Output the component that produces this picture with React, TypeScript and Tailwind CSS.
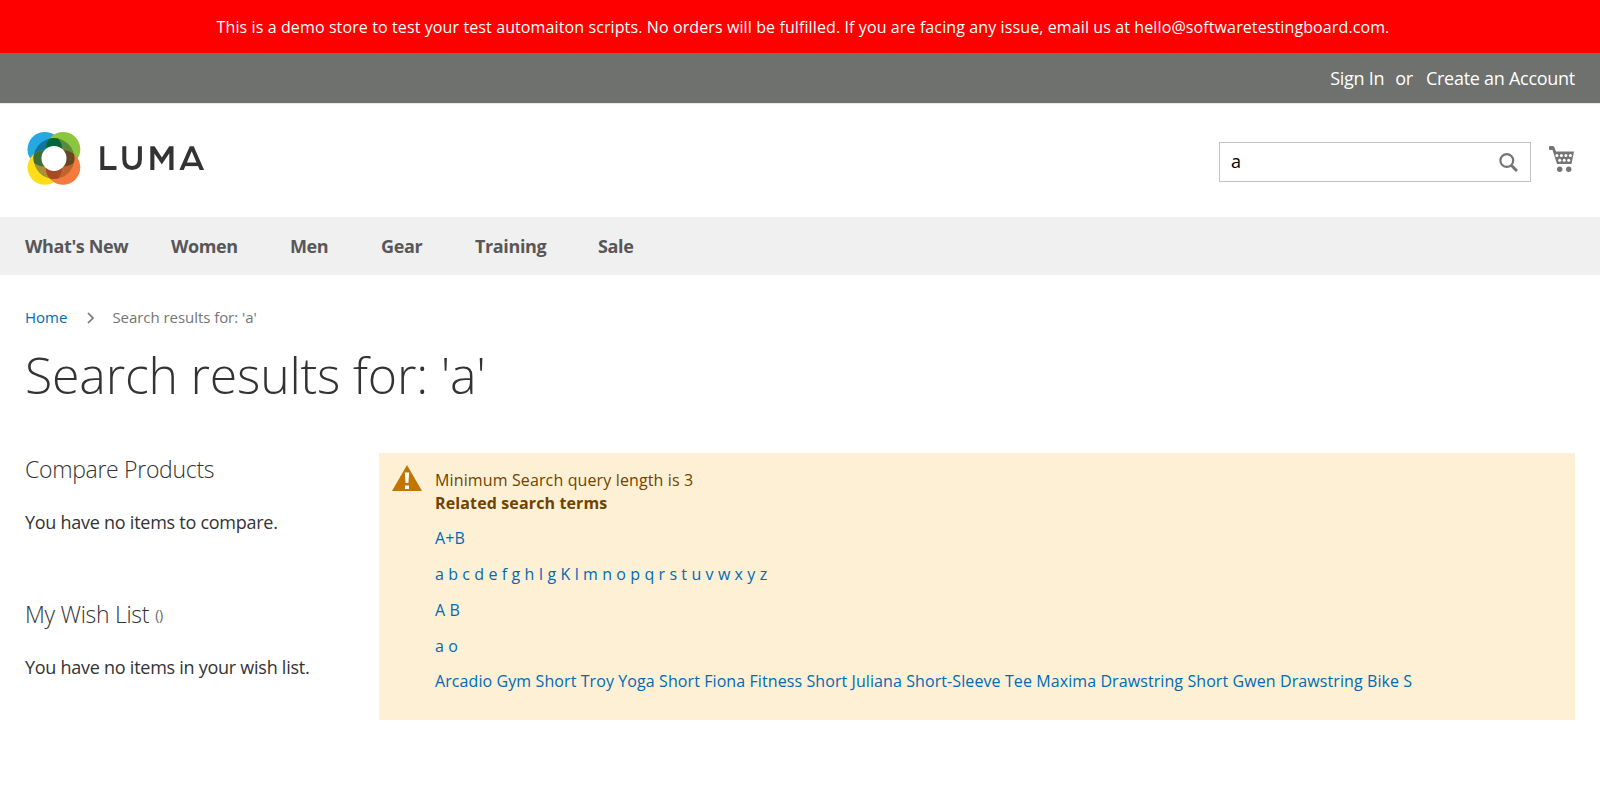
const NAV: [string, string][] = [
  ["What's New", 'w-[146px]'],
  ['Women', 'w-[119px]'],
  ['Men', 'w-[91px]'],
  ['Gear', 'w-[94px]'],
  ['Training', 'w-[123px]'],
  ['Sale', 'w-[40px]'],
];

const TERMS = [
  'A+B',
  'a b c d e f g h I g K l m n o p q r s t u v w x y z',
  'A B',
  'a o',
  'Arcadio Gym Short Troy Yoga Short Fiona Fitness Short Juliana Short-Sleeve Tee Maxima Drawstring Short Gwen Drawstring Bike S',
];

function Logo() {
  return (
    <svg className="mt-[29px]" width="182" height="56" viewBox="0 0 182 56">
      <defs>
        <clipPath id="ring"><circle cx="29" cy="26.500" r="20.400" /></clipPath>
        <clipPath id="tl"><circle cx="19.800" cy="17.300" r="17.300" /></clipPath>
        <clipPath id="br"><circle cx="38" cy="35.500" r="17.300" /></clipPath>
      </defs>
      <circle cx="19.800" cy="17.300" r="17.300" fill="#26a9e0" />
      <circle cx="38" cy="17.300" r="17.300" fill="#8cc63f" />
      <circle cx="19.800" cy="35.500" r="17.300" fill="#ffde17" />
      <circle cx="38" cy="35.500" r="17.300" fill="#f47b3e" />
      <g clipPath="url(#ring)">
        <circle cx="19.800" cy="17.300" r="17.300" fill="#0f75a0" />
        <circle cx="38" cy="17.300" r="17.300" fill="#5a8a3c" />
        <circle cx="19.800" cy="35.500" r="17.300" fill="#a89234" />
        <circle cx="38" cy="35.500" r="17.300" fill="#c4622d" />
        <g clipPath="url(#tl)">
          <circle cx="38" cy="17.300" r="17.300" fill="#006837" />
          <circle cx="19.800" cy="35.500" r="17.300" fill="#3c6e35" />
        </g>
        <g clipPath="url(#br)">
          <circle cx="38" cy="17.300" r="17.300" fill="#654720" />
          <circle cx="19.800" cy="35.500" r="17.300" fill="#a54a24" />
        </g>
      </g>
      <circle cx="29" cy="26.400" r="12.500" fill="#fff" />
      <g fill="none" stroke="#333" strokeWidth="4">
        <path d="M77.300 14.300v21.600h14.200M99.300 14.300v13q0 8.700 7.800 8.700t7.800-8.700v-13" />
        <path d="M160 32.300h13.500" strokeWidth="3.600" />
      </g>
      <g fill="#333">
        <path d="M125.300 14.300h4.300l7.300 11.200 7.300-11.200h4.300v23.600h-4.200V21.300l-7.400 11h-.2l-7.300-10.900v16.500h-4.100z" />
        <path d="M164.800 14.200h3.900l10.400 23.700h-4.400l-8-18.700-8 18.700h-4.300z" />
      </g>
    </svg>
  );
}

function CartIcon() {
  return (
    <svg width="26" height="27" viewBox="0 0 26 27" fill="#757575">
      <path d="M0 1q0-1 1-1h3q1 0 1.500 1.500L7 5.500h18L22.500 18H8L3.500 4H1Q0 4 0 3z" />
      <circle cx="10.700" cy="23.200" r="2.700" /><circle cx="19.700" cy="23.200" r="2.700" />
      <g fill="#fff">
        <circle cx="7.900" cy="9.600" r="1.500" /><circle cx="12.400" cy="9.600" r="1.500" /><circle cx="16.900" cy="9.600" r="1.500" /><circle cx="21.400" cy="9.600" r="1.500" />
        <circle cx="10.700" cy="14.200" r="1.500" /><circle cx="15.200" cy="14.200" r="1.500" /><circle cx="19.700" cy="14.200" r="1.500" />
      </g>
    </svg>
  );
}

function SideBlock({ title, count, text }: { title: string; count?: string; text: string }) {
  return (
    <div className="h-[145px]">
      <h2 className="flex h-[34px] text-[23px] leading-[34px] font-light tracking-[-0.3px]">
        {title}
        {count && <span className="ml-[6px] text-[14px] leading-[36px] font-normal tracking-[-0.2px] text-[#666]">{count}</span>}
      </h2>
      <p className="mt-[23px] text-[18px] leading-[26px] tracking-[-0.26px]">{text}</p>
    </div>
  );
}

export default function App() {
  return (
    <div className="flex h-[810px] flex-col overflow-hidden bg-white font-['Open_Sans',sans-serif] text-[#333]">
      <div className="flex h-[53px] shrink-0 items-center justify-center bg-[#ff0000] pl-[6px] text-[16px] tracking-[0.11px] text-white">
        <p>This is a demo store to test your test automaiton scripts. No orders will be fulfilled. If you are facing any issue, email us at hello@softwaretestingboard.com.</p>
      </div>
      <div className="flex h-[50px] shrink-0 items-center justify-end bg-[#6e716e] px-[25px] text-[18px] tracking-[-0.27px] text-white">
        <a>Sign In</a>
        <span className="mr-[13px] ml-[11px]">or</span>
        <a>Create an Account</a>
      </div>
      <header className="flex h-[114px] shrink-0 items-start justify-between border-t border-[#e8e8e8] px-[25px]">
        <div className="-mt-px"><Logo /></div>
        <div className="mt-[38px] flex items-start">
          <div className="flex h-[40px] w-[312px] items-center justify-between border border-[#c2c2c2] pr-3 pl-[11px] text-[18px] text-black">
            <span className="pb-[2px]">a</span>
            <svg width="19" height="19" viewBox="0 0 19 19" fill="none" stroke="#757575" strokeWidth="2.200">
              <circle cx="7.800" cy="7.500" r="6.400" />
              <path d="m12.500 12.500 5.500 5.500" strokeWidth="3" />
            </svg>
          </div>
          <div className="mt-1 ml-[18px]"><CartIcon /></div>
        </div>
      </header>
      <nav className="flex h-[58px] shrink-0 items-center bg-[#f0f0f0] px-[25px] text-[18px] font-bold tracking-[-0.38px] text-[#575757]">
        {NAV.map(([name, width]) => (
          <a key={name} className={`shrink-0 whitespace-nowrap ${width}`}>{name}</a>
        ))}
      </nav>
      <div className="flex h-[70px] shrink-0 items-center px-[25px] pt-[15px] text-[15px]">
        <a className="text-[#006bb4]">Home</a>
        <svg className="mr-[17px] ml-[20px]" width="8" height="12" viewBox="0 0 8 12" fill="none" stroke="#757575" strokeWidth="1.700">
          <path d="m1 1 5 5-5 5" />
        </svg>
        <span className="tracking-[-0.05px] text-[#757575]">Search results for: 'a'</span>
      </div>
      <h1 className="shrink-0 px-[25px] text-[50px] leading-[60px] font-light tracking-[-0.2px]">Search results for: 'a'</h1>
      <main className="mt-[48px] flex items-start px-[25px]">
        <aside className="-mt-px w-[354px]">
          <SideBlock title="Compare Products" text="You have no items to compare." />
          <SideBlock title="My Wish List" count="()" text="You have no items in your wish list." />
        </aside>
        <section className="flex h-[267px] flex-1 bg-[#fdf0d5] pl-[13px] text-[16px] tracking-[0.09px] text-[#6f4400]">
          <svg className="mt-3 mr-[13px] shrink-0" width="30" height="26" viewBox="0 0 30 26">
            <path d="M15 0 30 26H0z" fill="#c07600" />
            <path d="M12.800 7.500h4.400l-.8 10.500h-2.800zM13 20.500h4V24h-4z" fill="#fff" />
          </svg>
          <div className="pt-4 leading-[23px]">
            <p className="tracking-[0.13px]">Minimum Search query length is 3</p>
            <p className="mb-3 font-bold tracking-[0.13px]">Related search terms</p>
            <div className="flex flex-col">
              {TERMS.map((t) => (
                <p key={t} className="mb-[13px] text-[#006bb4] last:-mt-px">{t}</p>
              ))}
            </div>
          </div>
        </section>
      </main>
    </div>
  );
}
